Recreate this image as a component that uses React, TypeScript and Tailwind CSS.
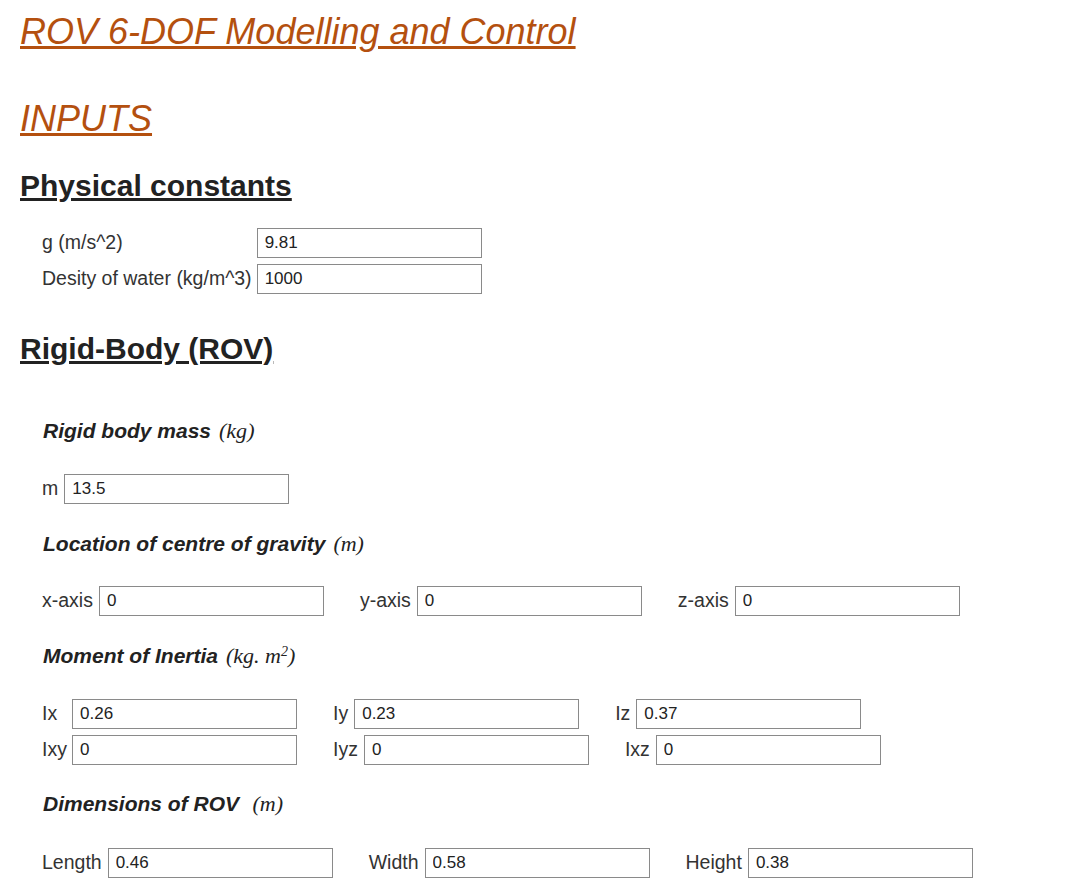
import React from "react";

const Input = ({ value }: { value: string }) => (
  <input
    readOnly
    value={value}
    className="w-[225px] h-[30px] border border-[#8a8a8a] bg-white pl-[7px] text-[17px] text-[#222] outline-none font-['Liberation_Sans',Arial,sans-serif]"
  />
);

const Pair = ({ label, value, labelW, first }: { label: string; value: string; labelW?: string; first?: boolean }) => (
  <div className={`flex items-center gap-[6px] ${first ? "" : "ml-[36px]"}`}>
    <span className={labelW ?? ""}>{label}</span>
    <Input value={value} />
  </div>
);

const Sub = ({ children, unit, className }: { children: React.ReactNode; unit: React.ReactNode; className?: string }) => (
  <div className={`ml-[23px] text-[21px] font-bold italic text-[#222] leading-[24px] ${className ?? ""}`}>
    {children}
    <span className="ml-[8px] font-normal font-['Liberation_Serif','Times_New_Roman',serif] text-[22px]">{unit}</span>
  </div>
);

export default function App() {
  return (
    <div className="min-h-screen bg-white font-['Liberation_Sans',Arial,sans-serif] text-[#333] text-[19.5px] px-[20px] pt-[11px]">
      <h1 className="text-[36px] italic text-[#b4500f] underline leading-[41px] inline-block">
        ROV 6-DOF Modelling and Control
      </h1>
      <div className="mt-[46px]">
        <h2 className="text-[36px] italic text-[#b4500f] underline leading-[41px] inline-block">INPUTS</h2>
      </div>
      <h3 className="mt-[29px] text-[30px] font-bold text-[#222] underline leading-[34px]">Physical constants</h3>

      <div className="mt-[25px] ml-[22px] grid grid-cols-[auto_225px] gap-x-[5px] gap-y-[6px] items-center w-fit">
        <span>g (m/s^2)</span>
        <Input value="9.81" />
        <span>Desity of water (kg/m^3)</span>
        <Input value="1000" />
      </div>

      <h3 className="mt-[38px] text-[30px] font-bold text-[#222] underline leading-[34px]">Rigid-Body (ROV)</h3>

      <div className="mt-[53px]">
        <Sub unit={<>(<i>kg</i>)</>}>Rigid body mass</Sub>
      </div>

      <div className="mt-[31px] ml-[22px] flex items-center">
        <Pair first label="m" value="13.5" />
      </div>

      <Sub className="mt-[28px]" unit={<>(<i>m</i>)</>}>Location of centre of gravity</Sub>

      <div className="mt-[30px] ml-[22px] flex items-center">
        <Pair first label="x-axis" value="0" />
        <Pair label="y-axis" value="0" />
        <Pair label="z-axis" value="0" />
      </div>

      <Sub className="mt-[28px]" unit={<>(<i>kg</i>. <i>m</i><sup className="text-[14px]">2</sup>)</>}>Moment of Inertia</Sub>

      <div className="mt-[31px] ml-[22px] flex flex-col gap-[6px]">
        <div className="flex items-center">
          <Pair first label="Ix" labelW="w-[24px]" value="0.26" />
          <Pair label="Iy" value="0.23" />
          <Pair label="Iz" value="0.37" />
        </div>
        <div className="flex items-center">
          <Pair first label="Ixy" labelW="w-[24px]" value="0" />
          <Pair label="Iyz" value="0" />
          <Pair label="Ixz" value="0" />
        </div>
      </div>

      <Sub className="mt-[27px]" unit={<>&nbsp;(<i>m</i>)</>}>Dimensions of ROV</Sub>

      <div className="mt-[32px] ml-[22px] flex items-center">
        <Pair first label="Length" value="0.46" />
        <Pair label="Width" value="0.58" />
        <Pair label="Height" value="0.38" />
      </div>
    </div>
  );
}
